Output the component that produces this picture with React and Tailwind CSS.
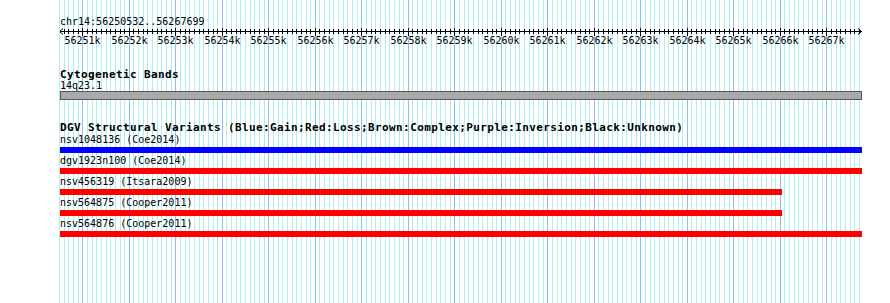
import React from "react";

const X0 = 82.3;
const KB = 46.5;

const minor = [];
for (let j = -5; j <= 167; j++) {
  if (j % 10 === 0) continue;
  minor.push(Math.round(X0 + j * (KB / 10)) + 0.5);
}
const major = [];
for (let k = 0; k <= 16; k++) major.push(Math.round(X0 + k * KB) + 0.5);

const tracks = [
  { label: "nsv1048136 (Coe2014)", color: "bg-[#0000ff]", w: "w-[802px]" },
  { label: "dgv1923n100 (Coe2014)", color: "bg-[#ff0000]", w: "w-[802px]" },
  { label: "nsv456319 (Itsara2009)", color: "bg-[#ff0000]", w: "w-[722px]" },
  { label: "nsv564875 (Cooper2011)", color: "bg-[#ff0000]", w: "w-[722px]" },
  { label: "nsv564876 (Cooper2011)", color: "bg-[#ff0000]", w: "w-[802px]" },
];

const mono = "font-['DejaVu_Sans_Mono',monospace]";

export default function App() {
  return (
    <div className="relative w-[890px] h-[303px] overflow-hidden bg-white text-black">
      <svg className="absolute inset-0" width="890" height="303" shapeRendering="crispEdges">
        {minor.map((x, i) => (
          <line key={"m" + i} x1={x} x2={x} y1={0} y2={303} stroke="#aeeeee" strokeWidth="1" />
        ))}
        {major.map((x, i) => (
          <line key={"M" + i} x1={x} x2={x} y1={0} y2={303} stroke="#8ec0ee" strokeWidth="1" />
        ))}
      </svg>

      <div className={`relative flex flex-col pl-[60px] ${mono}`}>
        <div className="mt-[15px] h-[13px] text-[10px] leading-[13px]">chr14:56250532..56267699</div>
        <svg width="830" height="20" className="block">
          <g transform="translate(-60,0)" shapeRendering="crispEdges">
            <line x1={59} x2={862} y1={3.5} y2={3.5} stroke="#000" />
            {minor.map((x, i) => (
              <line key={"t" + i} x1={x} x2={x} y1={1} y2={6} stroke="#000" />
            ))}
            {major.map((x, i) => (
              <line key={"T" + i} x1={x} x2={x} y1={0} y2={8} stroke="#000" />
            ))}
          </g>
          <g transform="translate(-60,0)">
            <polyline points="63,0.5 59.5,3.5 63,6.5" fill="none" stroke="#000" />
            <polyline points="858,0.5 861.5,3.5 858,6.5" fill="none" stroke="#000" />
            {major.map((x, i) => (
              <text
                key={"n" + i}
                x={x}
                y={16}
                textAnchor="middle"
                fontFamily="DejaVu Sans Mono, monospace"
                fontSize="10"
                fill="#000"
              >
                {56251 + i}k
              </text>
            ))}
          </g>
        </svg>

        <div className="mt-[20px] h-[13px] text-[11px] font-bold leading-[13px] tracking-[0.38px]">
          Cytogenetic Bands
        </div>
        <div className="h-[10px] text-[10px] leading-[10px]">14q23.1</div>
        <div className="h-[9px] w-[802px] border border-[#555] bg-[#aaaaaa]"></div>

        <div className="mt-[23px] h-[10px] text-[11px] font-bold leading-[10px] tracking-[0.38px]">
          DGV Structural Variants (Blue:Gain;Red:Loss;Brown:Complex;Purple:Inversion;Black:Unknown)
        </div>
        {tracks.map((t, i) => (
          <div key={i} className="flex flex-col">
            <div className="h-[13px] text-[10px] leading-[13px]">{t.label}</div>
            <div className={`mt-[1px] mb-[1px] h-[6px] ${t.w} ${t.color}`}></div>
          </div>
        ))}
      </div>
    </div>
  );
}
